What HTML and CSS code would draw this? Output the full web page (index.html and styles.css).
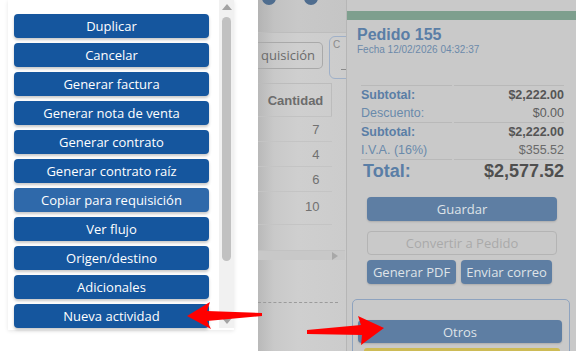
FILE: index.html
```html
<!DOCTYPE html>
<html lang="es">
<head>
    <meta charset="UTF-8">
    <title>Pedido 155 - Otros</title>
    <link rel="stylesheet" href="styles.css">
</head>
<body>
    <div class="screen">
        <div class="menu-pane">
            <div class="menu">
                <div class="menu-list">
                    <button class="menu-btn">Duplicar</button>
                    <button class="menu-btn">Cancelar</button>
                    <button class="menu-btn">Generar factura</button>
                    <button class="menu-btn">Generar nota de venta</button>
                    <button class="menu-btn">Generar contrato</button>
                    <button class="menu-btn">Generar contrato raíz</button>
                    <button class="menu-btn hover">Copiar para requisición</button>
                    <button class="menu-btn">Ver flujo</button>
                    <button class="menu-btn">Origen/destino</button>
                    <button class="menu-btn">Adicionales</button>
                    <button class="menu-btn">Nueva actividad</button>
                </div>
                <div class="scrollbar">
                    <span class="sb-up"></span>
                    <span class="sb-thumb"></span>
                    <span class="sb-down"></span>
                </div>
            </div>
        </div>

        <div class="backdrop">
            <div class="grid-area">
                <div class="grid-top">
                    <span class="dot dot-a"></span>
                    <span class="dot dot-b"></span>
                </div>
                <div class="grid-tools">
                    <span class="tool-btn">quisición</span>
                    <span class="tool-select"><small>C</small><i></i></span>
                </div>
                <table class="grid">
                    <thead>
                        <tr><th>Cantidad</th></tr>
                    </thead>
                    <tbody>
                        <tr><td>7</td></tr>
                        <tr><td>4</td></tr>
                        <tr><td>6</td></tr>
                        <tr class="tall"><td>10</td></tr>
                    </tbody>
                </table>
                <div class="hscroll"><span class="hs-arrow"></span></div>
                <div class="dashed"></div>
            </div>

            <div class="side">
                <div class="side-strip"></div>
                <div class="order-head">
                    <h2>Pedido 155</h2>
                    <p>Fecha 12/02/2026 04:32:37</p>
                </div>

                <table class="totals">
                    <tr class="sep strong"><td>Subtotal:</td><td>$2,222.00</td></tr>
                    <tr><td>Descuento:</td><td>$0.00</td></tr>
                    <tr class="sep strong"><td>Subtotal:</td><td>$2,222.00</td></tr>
                    <tr class="light"><td>I.V.A. (16%)</td><td>$355.52</td></tr>
                    <tr class="sep grand"><td>Total:</td><td>$2,577.52</td></tr>
                </table>

                <div class="actions">
                    <button class="act-btn wide">Guardar</button>
                    <button class="act-btn outline wide">Convertir a Pedido</button>
                    <div class="act-row">
                        <button class="act-btn">Generar PDF</button>
                        <button class="act-btn">Enviar correo</button>
                    </div>
                </div>

                <div class="others-box">
                    <button class="act-btn others">Otros</button>
                    <div class="yellow-bar"></div>
                </div>
            </div>
        </div>

        <svg class="arrows" width="576" height="351" viewBox="0 0 576 351">
            <polygon points="187,316 210,302 207,311 262,313 262,316 207,321 211,329" fill="#f00"/>
            <polygon points="307,330 307,334 362,335 361,345 384,328 358,316 361,325" fill="#f00"/>
        </svg>
    </div>
</body>
</html>
```

FILE: styles.css
```css
* {
    margin: 0;
    padding: 0;
    box-sizing: border-box;
}

body {
    width: 576px;
    height: 351px;
    overflow: hidden;
    font-family: 'Liberation Sans', Arial, sans-serif;
    background: #fff;
}

.screen {
    position: relative;
    display: flex;
    width: 576px;
    height: 351px;
    overflow: hidden;
}

/* ---------- dropdown menu ---------- */

.menu-pane {
    width: 258px;
    background: #fff;
    padding-left: 8px;
}

.menu {
    display: flex;
    width: 226px;
    height: 330px;
    background: #fff;
    box-shadow: 0 1px 4px rgba(0, 0, 0, 0.1);
}

.menu-list {
    display: flex;
    flex-direction: column;
    gap: 5px;
    padding: 14px 0 0 6px;
    width: 211px;
}

.menu-btn {
    width: 195px;
    height: 24px;
    border: none;
    border-radius: 4px;
    background: #15569e;
    color: #fff;
    font-family: 'Open Sans', sans-serif;
    font-size: 13px;
    box-shadow: 0 2px 3px rgba(0, 0, 0, 0.22);
}

.menu-btn.hover {
    background: #2f69aa;
}

.scrollbar {
    position: relative;
    width: 15px;
    height: 328px;
    background: #f1f1f1;
}

.sb-up,
.sb-down {
    position: absolute;
    left: 3px;
    width: 0;
    height: 0;
    border-left: 5px solid transparent;
    border-right: 5px solid transparent;
}

.sb-up {
    top: 4px;
    border-bottom: 6px solid #a3a3a3;
}

.sb-down {
    bottom: 4px;
    border-top: 6px solid #a3a3a3;
}

.sb-thumb {
    position: absolute;
    top: 17px;
    left: 3px;
    width: 9px;
    height: 244px;
    border-radius: 5px;
    background: #c1c1c1;
}

/* ---------- dimmed page behind ---------- */

.backdrop {
    flex: 1;
    display: flex;
    background: #cbcbcb;
}

.grid-area {
    position: relative;
    width: 88px;
    overflow: hidden;
    background: linear-gradient(90deg, #b9b9b9 0px, #c9c9c9 16px, #cfcfcf 40px, #cccccc 88px);
}

.grid-top {
    position: relative;
    height: 33px;
    border-bottom: 1px solid #bdbdbd;
    background: rgba(0, 0, 0, 0.03);
}

.dot {
    position: absolute;
    top: -9px;
    width: 14px;
    height: 14px;
    border-radius: 50%;
    background: #4f6d8f;
}

.dot-a { left: 4px; }
.dot-b { left: 46px; }

.grid-tools {
    display: flex;
    gap: 6px;
    height: 50px;
    padding-top: 9px;
}

.tool-btn {
    flex: none;
    width: 65px;
    height: 27px;
    border: 1px solid #a9a9a9;
    border-left: none;
    border-radius: 0 5px 5px 0;
    color: #6b6b6b;
    font-family: 'Open Sans', sans-serif;
    font-size: 13px;
    line-height: 25px;
    text-align: right;
    padding-right: 7px;
}

.tool-select {
    position: relative;
    flex: none;
    width: 30px;
    height: 43px;
    margin-top: -6px;
    border: 1px solid #9fb0c8;
    border-radius: 6px;
    color: #8a8a8a;
}

.tool-select small {
    position: absolute;
    left: 3px;
    top: 2px;
    font-size: 10px;
}

.tool-select i {
    position: absolute;
    left: 11px;
    top: 32px;
    width: 8px;
    border-top: 1px solid #8a8a8a;
}

.grid {
    width: 74px;
    border-collapse: collapse;
    color: #717171;
}

.grid th {
    height: 33px;
    border-top: 1px solid #bcbcbc;
    border-right: 1px solid #bcbcbc;
    border-bottom: 1px solid #c2c2c2;
    font-size: 13px;
    font-weight: bold;
    color: #6c6c6c;
    text-align: center;
    padding-left: 2px;
}

.grid td {
    height: 25px;
    border-bottom: 1px solid #c4c4c4;
    text-align: right;
    padding-right: 12px;
    font-size: 13px;
}

.grid tr.tall td {
    height: 33px;
    padding-bottom: 4px;
}

.hscroll {
    position: relative;
    height: 10px;
    margin-top: 25px;
    border-top: 1px solid #c2c2c2;
    background: #c8c8c8;
    width: 87px;
}

.hs-arrow {
    position: absolute;
    right: 7px;
    top: 1px;
    width: 0;
    height: 0;
    border-top: 4px solid transparent;
    border-bottom: 4px solid transparent;
    border-left: 6px solid #a8a8a8;
}

.dashed {
    margin-top: 42px;
    width: 80px;
    border-top: 1px dashed #9b9b9b;
}

/* ---------- order side panel ---------- */

.side {
    flex: 1;
    border-left: 1px solid #b6b6b6;
    background: #c9c9c9;
}

.side-strip {
    height: 9px;
    margin-top: 11px;
    background: #7e9f8e;
}

.order-head {
    height: 65px;
    padding: 6px 0 0 10px;
}

.order-head h2 {
    font-size: 16px;
    line-height: 18px;
    color: #5a7ea6;
}

.order-head p {
    font-size: 10px;
    line-height: 11px;
    color: #6c89aa;
}

.totals {
    width: 207px;
    margin-left: 12px;
    border-spacing: 2px 0;
    font-size: 12.5px;
    color: #6a8aab;
}

.totals td {
    height: 18.5px;
    line-height: 16px;
}

.totals td:last-child {
    text-align: right;
    color: #5e5e5e;
}

.totals tr.sep td {
    border-top: 1px solid #b9b9b9;
}

.totals tr.strong td {
    font-weight: bold;
    color: #5a7ea6;
}

.totals tr.strong td:last-child {
    color: #555;
}

.totals tr.light td:last-child {
    color: #6a6a6a;
}

.totals tr.grand td {
    height: 22px;
    font-size: 18px;
    font-weight: bold;
    color: #5a7ea6;
    padding-left: 2px;
}

.totals tr.grand td:last-child {
    color: #4f4f4f;
    padding-left: 0;
}

.actions {
    display: flex;
    flex-direction: column;
    gap: 10px;
    padding: 16px 0 0 20px;
}

.act-btn {
    height: 24px;
    border: none;
    border-radius: 4px;
    background: #5e7ea3;
    color: #dfe3e8;
    font-family: 'Open Sans', sans-serif;
    font-size: 13px;
    padding: 0 4px;
    box-shadow: 0 1px 2px rgba(0, 0, 0, 0.15);
}

.act-btn.wide {
    width: 190px;
}

.act-btn.outline {
    background: transparent;
    border: 1px solid #b4b4b4;
    color: #a9a9a9;
    box-shadow: none;
}

.act-row {
    display: flex;
    gap: 5px;
    margin-top: -5px;
}

.act-row .act-btn:first-child { width: 89px; }
.act-row .act-btn:last-child { width: 91px; }

.others-box {
    width: 218px;
    height: 70px;
    margin: 15px 0 0 5px;
    padding: 20px 0 0 5px;
    border: 1px solid #8ea3bf;
    border-radius: 5px;
}

.act-btn.others {
    width: 204px;
    height: 23px;
}

.yellow-bar {
    width: 196px;
    height: 6px;
    margin: 5px 0 0 6px;
    border-radius: 3px;
    background: #cdbb56;
}

/* ---------- annotation arrows ---------- */

.arrows {
    position: absolute;
    left: 0;
    top: 0;
    pointer-events: none;
}
```
